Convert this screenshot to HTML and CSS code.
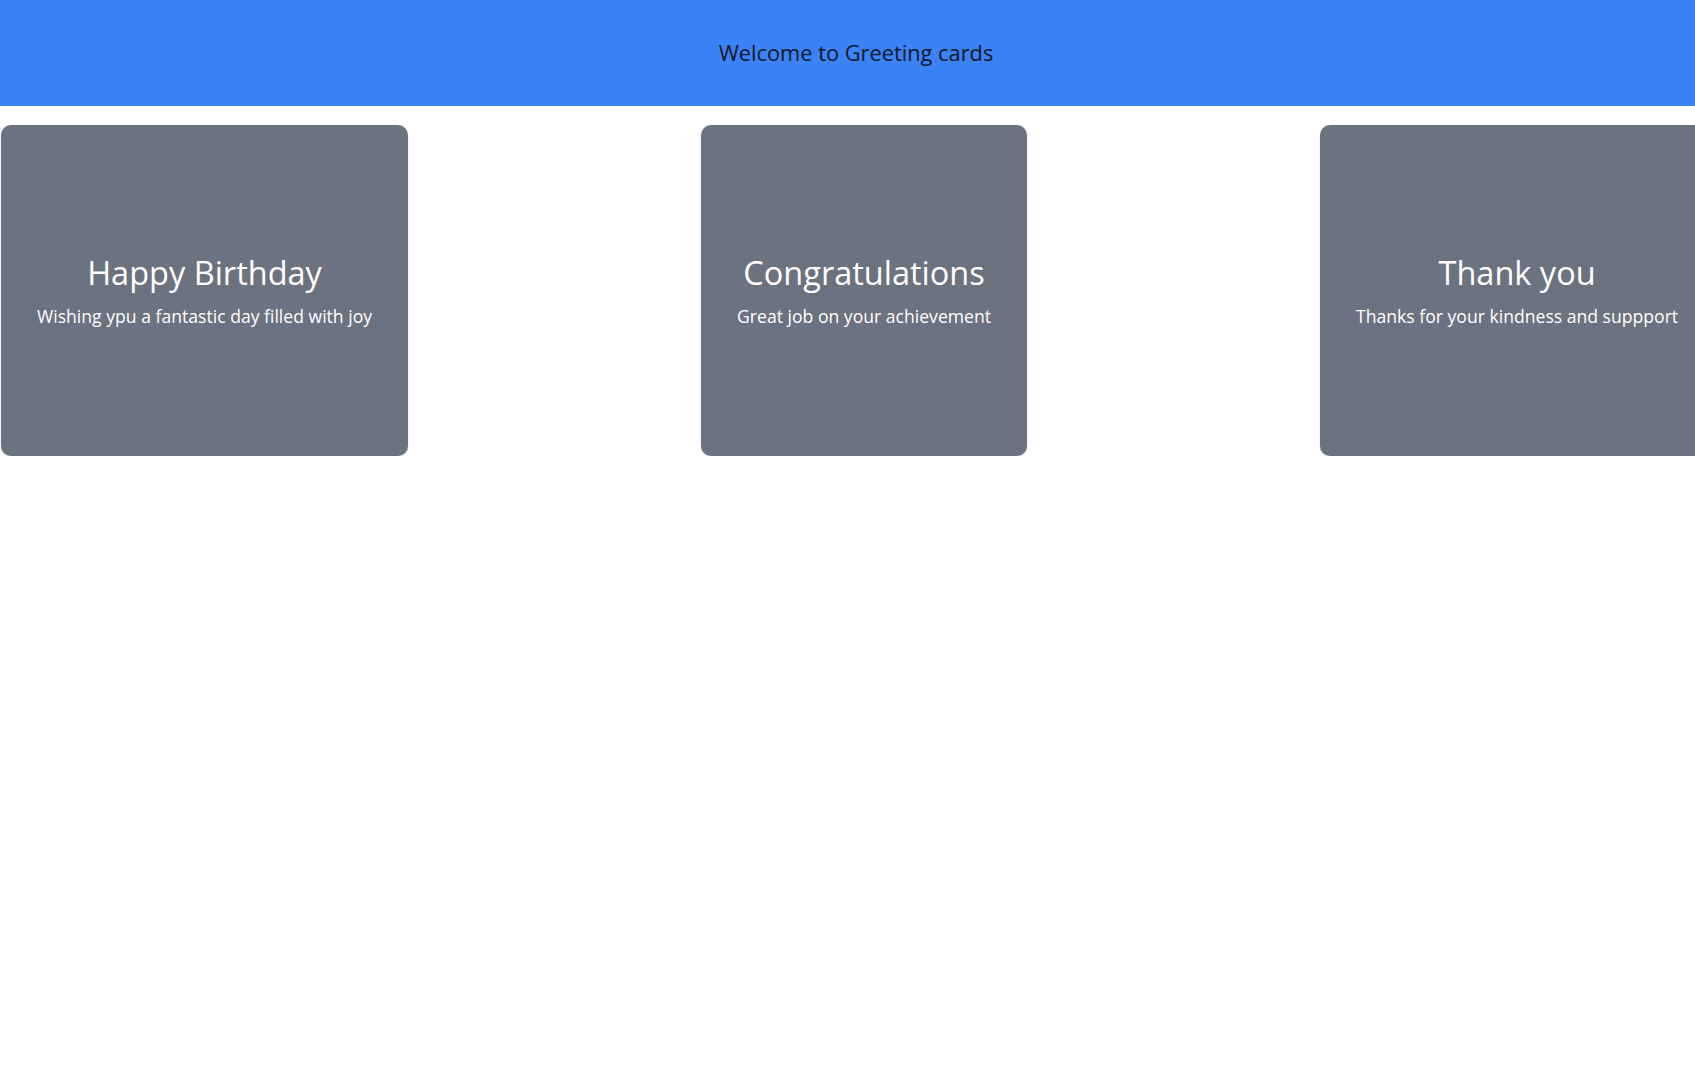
FILE: index.html
```html
<!DOCTYPE html>
<html lang="en">
<head>
<meta charset="utf-8">
<title>Greeting cards</title>
<link rel="stylesheet" href="styles.css">
</head>
<body>
<header class="header">
  <h1 class="header-title">Welcome to Greeting cards</h1>
</header>
<main class="cards">
  <div class="card">
    <h2 class="card-title">Happy Birthday</h2>
    <p class="card-text">Wishing ypu a fantastic day filled with joy</p>
  </div>
  <div class="card">
    <h2 class="card-title">Congratulations</h2>
    <p class="card-text">Great job on your achievement</p>
  </div>
  <div class="card">
    <h2 class="card-title">Thank you</h2>
    <p class="card-text">Thanks for your kindness and suppport</p>
  </div>
</main>
</body>
</html>
```

FILE: styles.css
```css
html, body {
  margin: 0;
  padding: 0;
  background: #ffffff;
  overflow: hidden;
  font-family: "Open Sans", "Noto Sans", sans-serif;
}

.header {
  background: #3b82f6;
  height: 106px;
  box-sizing: border-box;
  padding-left: 17px;
  display: flex;
  align-items: center;
  justify-content: center;
}

.header-title {
  margin: 0;
  font-size: 21.8px;
  font-weight: 400;
  line-height: 32px;
  color: #111827;
}

.cards {
  display: flex;
  flex-wrap: nowrap;
  gap: 293px;
  padding: 19px 0 0 1px;
}

.card {
  flex: 0 0 auto;
  background: #6b7280;
  border-radius: 10px;
  box-shadow: 0 1px 2px rgba(0, 0, 0, 0.15);
  height: 331px;
  box-sizing: border-box;
  padding: 2px 36px 0;
  display: flex;
  flex-direction: column;
  justify-content: center;
  align-items: center;
  color: #ffffff;
  text-align: center;
}

.card-title {
  margin: 0;
  font-size: 32.5px;
  font-weight: 400;
  line-height: 40px;
}

.card-text {
  margin: 9px 0 0;
  font-size: 17.6px;
  line-height: 28px;
  white-space: nowrap;
}
```
